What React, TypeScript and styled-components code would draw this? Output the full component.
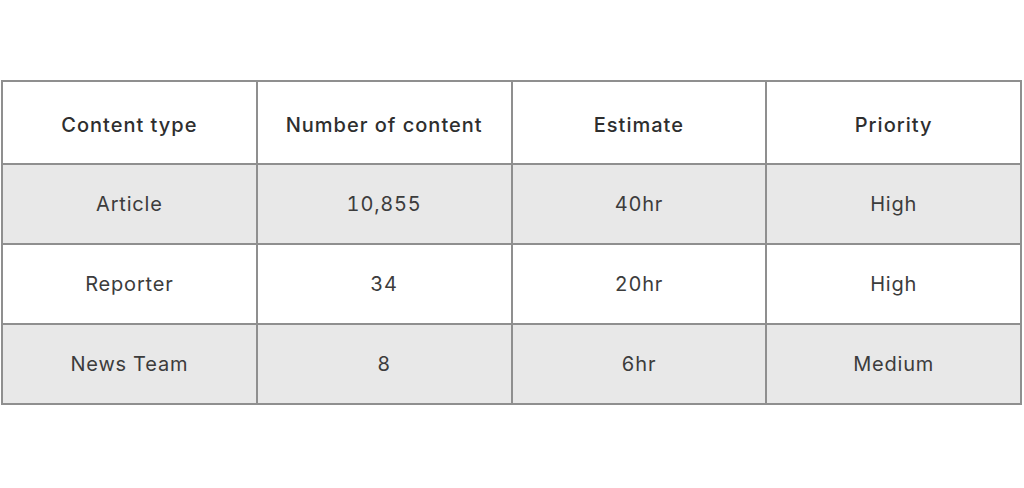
import React from 'react'
import styled, { createGlobalStyle } from 'styled-components'

const GlobalStyle = createGlobalStyle`
    body {
        margin: 0;
        background: #ffffff;
        font-family: Inter, "Open Sans", sans-serif;
        color: #333333;
    }
`

const Page = styled.div`
    width: 1024px;
    height: 488px;
    padding: 80px 2px 0 1px;
    box-sizing: border-box;
`

const Table = styled.table`
    width: 1021px;
    border-collapse: collapse;
    table-layout: fixed;
`

const Row = styled.tr<{ $shaded?: boolean }>`
    background-color: ${(p) => (p.$shaded ? '#e8e8e8' : '#ffffff')};
    height: ${(p) => (p.$shaded === undefined ? 83 : 80)}px;
`

const HeadCell = styled.th`
    border: 2px solid #8f8f8f;
    font-size: 20px;
    font-weight: 500;
    letter-spacing: 1px;
    color: #2e2e2e;
    text-align: center;
    padding: 4px 0 0;
`

const Cell = styled.td`
    border: 2px solid #8f8f8f;
    font-size: 20px;
    font-weight: 400;
    letter-spacing: 0.8px;
    font-variant-numeric: tabular-nums;
    color: #3c3c3c;
    text-align: center;
    padding: 0;
`

const columns = ['Content type', 'Number of content', 'Estimate', 'Priority']

const rows = [
    ['Article', '10,855', '40hr', 'High'],
    ['Reporter', '34', '20hr', 'High'],
    ['News Team', '8', '6hr', 'Medium'],
]

export default function App() {
    return (
        <>
            <GlobalStyle />
            <Page>
                <Table>
                    <thead>
                        <Row>
                            {columns.map((c) => (
                                <HeadCell key={c}>{c}</HeadCell>
                            ))}
                        </Row>
                    </thead>
                    <tbody>
                        {rows.map((r, i) => (
                            <Row key={r[0]} $shaded={i % 2 === 0}>
                                {r.map((v, j) => (
                                    <Cell key={j}>{v}</Cell>
                                ))}
                            </Row>
                        ))}
                    </tbody>
                </Table>
            </Page>
        </>
    )
}
